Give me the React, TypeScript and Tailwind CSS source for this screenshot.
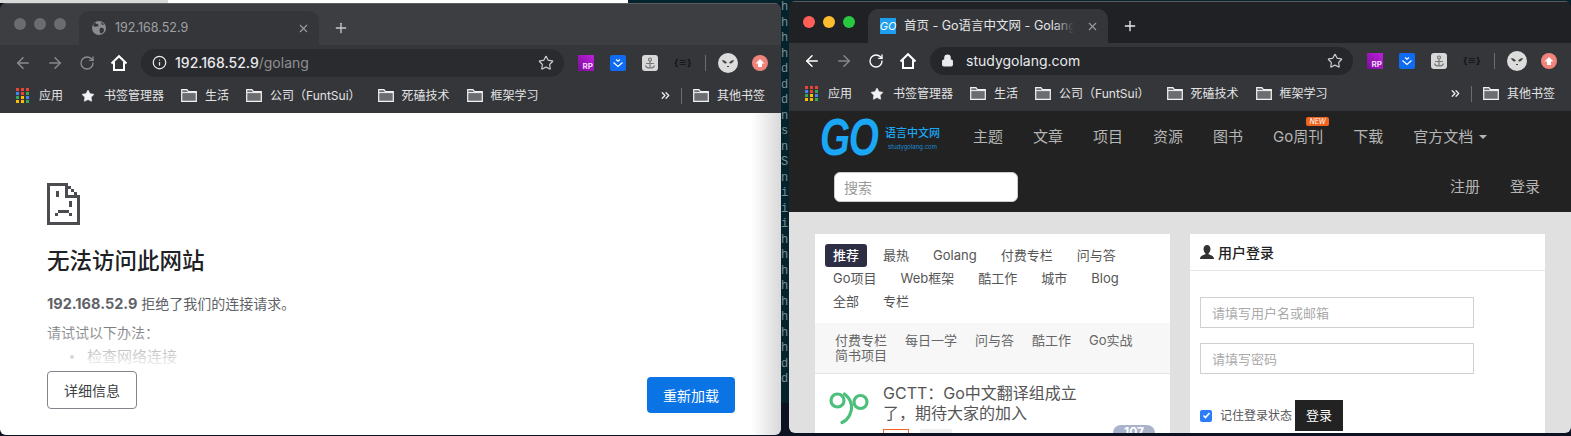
import type { ReactNode } from "react";
import { ArrowLeft, ArrowRight, ChevronsRight, Info, Lock, Plus, RotateCw, Star, X } from "lucide-react";

const bookmarks = ["生活", "公司（FuntSui）", "死磕技术", "框架学习"];
const termLetters = ["h", "h", "h", "h", "d", "d", "d", "n", "s", "n", "S", "n", "i", "i", "i", "h", "h", "h", "h", "h", "h", "h", "h", "d", "d"];
const topTabs = [
  ["推荐", "最热", "Golang", "付费专栏", "问与答"],
  ["Go项目", "Web框架", "酷工作", "城市", "Blog"],
  ["全部", "专栏"],
];
const subTabs = ["付费专栏", "每日一学", "问与答", "酷工作", "Go实战", "简书项目"];
const navItems = ["主题", "文章", "项目", "资源", "图书"];

function FolderIcon() {
  return (
    <svg width="16" height="13" viewBox="0 0 16 13" className="shrink-0">
      <path d="M0.7 0.7h5.2l1.6 2h7.8v9.6H0.7z" fill="#6b6d70" stroke="#f1f3f4" strokeWidth="1.2" />
      <path d="M0.7 3.6h14.6" stroke="#f1f3f4" strokeWidth="1" />
    </svg>
  );
}

function AppsIcon() {
  const colors = ["#ea4335", "#ea4335", "#ea4335", "#4285f4", "#ea4335", "#34a853", "#34a853", "#fbbc05", "#4285f4", "#fbbc05", "#fbbc05", "#34a853"];
  return (
    <div className="grid w-[13px] shrink-0 grid-cols-3 gap-x-[2px] gap-y-[1px]">
      {colors.map((c, i) => (
        <span key={i} className="h-[3px] w-[3px]" style={{ background: c }} />
      ))}
    </div>
  );
}

function HomeIcon() {
  return (
    <svg width="18" height="18" viewBox="0 0 18 18" fill="none" stroke="#fff" strokeWidth="2">
      <path d="M1.5 9.5 9 2.2l7.5 7.3M4 8v8h10V8" />
    </svg>
  );
}

function GlobeIcon() {
  return (
    <svg width="16" height="16" viewBox="0 0 16 16" className="shrink-0">
      <circle cx="8" cy="8" r="7" fill="#8a8c8f" />
      <path d="M4 2.5c1 2 3 1 3.5 2.5S5 7 3.5 6.5 1.5 5 4 2.5zM9 8c2-.5 4 0 4 2s-2 3.5-3 3.5S8 10 9 8zM10 2c1 1 2 1 3 2.5L11 5z" fill="#35363a" />
    </svg>
  );
}

function GoFavicon() {
  return (
    <span className="flex h-4 w-4 shrink-0 items-center justify-center bg-[#1e9fee] text-[11px] italic leading-none text-white">
      GO
    </span>
  );
}

function Extensions() {
  return (
    <div className="ml-[14px] flex items-center">
      <span className="flex h-4 w-4 items-end justify-end bg-gradient-to-tr from-[#7a0f96] to-[#c01fe0] pr-[1px] text-[8px] font-bold leading-[10px] text-[#f4d4ff]">RP</span>
      <span className="ml-4 flex h-4 w-4 items-center justify-center rounded-[2px] bg-[#0f6cf2]">
        <svg width="12" height="10" viewBox="0 0 12 10" fill="none" stroke="#fff" strokeWidth="1.2">
          <path d="M4 1.5 6 3.2l2-1.7M1.5 4.5 6 8.500l4.500-4" />
        </svg>
      </span>
      <span className="ml-4 flex h-4 w-4 items-center justify-center rounded-[3px] bg-[#d8d8d8]">
        <svg width="12" height="12" viewBox="0 0 12 12" fill="none" stroke="#777" strokeWidth="1.2">
          <circle cx="6" cy="2.500" r="1.500" />
          <path d="M6 4v7M2 6.500h8M1.500 8.500c.5 2 2 2.500 4.500 2.500s4-.5 4.500-2.500" />
        </svg>
      </span>
      <span className="ml-4 w-4 text-center text-[9px] font-bold leading-4 text-[#111]">{"{≡}"}</span>
      <span className="ml-[15px] h-[16px] w-px bg-[#6a6c6f]" />
      <span className="ml-[12px] flex h-5 w-5 items-center justify-center rounded-full bg-[#dcdcdc]">
        <svg width="14" height="10" viewBox="0 0 14 10" fill="#444">
          <path d="M1 2c2 0 4 1 5 3-2 1-4 0-5-3zM13 2c-2 0-4 1-5 3 2 1 4 0 5-3zM6 8h2v1H6z" />
        </svg>
      </span>
      <span className="ml-[14px] flex h-4 w-4 items-center justify-center rounded-full bg-[#f0847c]">
        <svg width="10" height="10" viewBox="0 0 10 10" fill="#fff">
          <path d="M5 1 9.500 5.500H7V9H3V5.500H.5z" />
        </svg>
      </span>
    </div>
  );
}

function BrowserChrome({ active, title, favicon, address }: { active: boolean; title: string; favicon: ReactNode; address: ReactNode }) {
  return (
    <div className="shrink-0">
      <div className={`flex h-[42px] items-end pl-[14px] shadow-[inset_0_1px_0_#5a5c5f] ${active ? "bg-[#202124]" : "bg-[#3c3e41]"}`}>
        <div className="mb-[15px] flex gap-2">
          <span className={`h-3 w-3 rounded-full ${active ? "bg-[#ff5f57]" : "bg-[#6a6c6f]"}`} />
          <span className={`h-3 w-3 rounded-full ${active ? "bg-[#febc2e]" : "bg-[#6a6c6f]"}`} />
          <span className={`h-3 w-3 rounded-full ${active ? "bg-[#28c840]" : "bg-[#6a6c6f]"}`} />
        </div>
        <div className="ml-[13px] flex h-[34px] w-[240px] items-center rounded-t-[10px] bg-[#35363a] pl-[12px] pr-[9px]">
          {favicon}
          <span className={`relative ml-[8px] w-[170px] overflow-hidden whitespace-nowrap text-[12.5px] ${active ? "text-[#e4e5e6]" : "text-[#9fa1a4]"}`}>
            {title}
            <span className="absolute inset-y-0 right-0 w-5 bg-gradient-to-r from-transparent to-[#35363a]" />
          </span>
          <X size={13} strokeWidth={2} className="ml-auto text-[#9a9c9f]" />
        </div>
        <Plus size={16} strokeWidth={2} className={`mb-[9px] ml-[14px] ${active ? "text-[#e8eaed]" : "text-[#c8c9cb]"}`} />
      </div>
      <div className="flex h-[35px] items-center bg-[#35363a] pl-[14px]">
        <ArrowLeft size={18} strokeWidth={2} className={active ? "text-white" : "text-[#8a8c8f]"} />
        <ArrowRight size={18} strokeWidth={2} className="ml-[14px] text-[#85878a]" />
        <RotateCw size={16} strokeWidth={2} className={`ml-[15px] ${active ? "text-white" : "text-[#8a8c8f]"}`} />
        <span className="ml-[15px]">
          <HomeIcon />
        </span>
        <div className={`ml-[13px] flex h-[28px] w-[423px] items-center rounded-full pl-[11px] pr-[10px] ${active ? "bg-[#26272a]" : "bg-[#2a2b2e]"}`}>
          {address}
          <Star size={16} strokeWidth={1.8} className="ml-auto text-[#c8cacc]" />
        </div>
        <Extensions />
      </div>
      <div className="flex h-[33px] items-center bg-[#35363a] pb-[2px] pl-4 pr-4 text-[12px] text-[#e3e4e5]">
        <AppsIcon />
        <span className="ml-[10px]">应用</span>
        <Star size={14} fill="#f1f3f4" strokeWidth={1} className="ml-[18px] text-[#f1f3f4]" />
        <span className="ml-[9px]">书签管理器</span>
        {bookmarks.map((b) => (
          <div key={b} className="ml-[17px] flex items-center gap-2">
            <FolderIcon />
            <span className="whitespace-nowrap">{b}</span>
          </div>
        ))}
        <ChevronsRight size={13} strokeWidth={2.5} className="ml-auto text-[#e8eaed]" />
        <span className="ml-[9px] h-[16px] w-px bg-[#6a6c6f]" />
        <div className="ml-[11px] flex items-center gap-2">
          <FolderIcon />
          <span>其他书签</span>
        </div>
      </div>
    </div>
  );
}

function SadPage() {
  return (
    <svg width="33" height="42" viewBox="0 0 33 42" fill="#4a4c4f">
      <path d="M0 0h21v3h3v3h3v3h3v3h3v30H0zM3 3v36h27V15H18V3zm18 3v6h6V9h-3V6z" fillRule="evenodd" />
      <path d="M9 8h3v6H9zM22 18h3v6h-3zM11 27h11v3H11zM8 30h3v3H8zM22 30h3v3h-3z" />
    </svg>
  );
}

function ErrorPage() {
  return (
    <div className="relative flex-1 overflow-hidden bg-white">
      <div className="pl-[47px] pt-[70px]">
        <SadPage />
        <h1 className="mt-[21px] text-[22.5px] font-medium leading-[30px] text-[#202124]">无法访问此网站</h1>
        <p className="mt-[18px] text-[14px] leading-[20px] text-[#5f6368]">
          <b className="text-[14.5px] font-bold">192.168.52.9</b> 拒绝了我们的连接请求。
        </p>
        <p className="mt-[9px] text-[14px] leading-[20px] text-[#5f6368]">请试试以下办法：</p>
        <div className="ml-[23px] mt-[4px] flex items-center text-[15px] leading-[20px] text-[#5f6368]">
          <span className="h-1 w-1 rounded-full bg-[#5f6368]" />
          <span className="ml-[13px]">检查网络连接</span>
        </div>
      </div>
      <div className="absolute inset-x-0 top-[205px] h-[53px] bg-gradient-to-b from-white/0 to-white" />
      <button className="absolute left-[47px] top-[258px] h-[38px] w-[90px] rounded-[4px] border border-[#80868b] bg-white text-[14px] text-[#3c4043]">详细信息</button>
      <button className="absolute left-[647px] top-[264px] h-[36px] w-[88px] rounded-[4px] bg-[#0b74e5] text-[14px] text-white">重新加载</button>
      <div className="absolute inset-y-0 right-0 w-[30px] bg-gradient-to-r from-transparent to-[#00000026]" />
    </div>
  );
}

function GoLogo() {
  return (
    <div className="flex w-[153px] shrink-0 items-center">
      <span className="block w-[64px] origin-left scale-x-[0.76] font-[family-name:'Liberation_Sans',sans-serif] text-[51px] font-bold italic leading-none tracking-[-2px] text-[#1aa7f5]">GO</span>
      <div className="ml-[1px] mt-[2px] text-center">
        <div className="whitespace-nowrap text-[11px] font-medium leading-[14px] text-[#1aa7f5]">语言中文网</div>
        <div className="mt-[3px] text-[6px] leading-[8px] text-[#1a8fd5]">studygolang.com</div>
      </div>
    </div>
  );
}

function GreenGo() {
  return (
    <svg width="40" height="36" viewBox="0 0 40 36" fill="none" stroke="#4cc07a" strokeWidth="3.2" strokeLinecap="round" className="mt-[8px] shrink-0">
      <circle cx="8.5" cy="9.5" r="6.5" />
      <circle cx="31.5" cy="11" r="6.5" />
      <path d="M15.500 3c4 3 6 6 7 11 .7 6-2 14-9.500 17.500" />
    </svg>
  );
}

function SiteHeader() {
  return (
    <div className="h-[101px] shrink-0 bg-[#222]">
      <div className="flex h-[52px] items-center pl-[31px] text-[15px] text-[#b5b5b5]">
        <GoLogo />
        {navItems.map((n) => (
          <span key={n} className="mr-[30px] whitespace-nowrap">{n}</span>
        ))}
        <span className="relative mr-[30px] whitespace-nowrap">
          Go周刊
          <span className="absolute -top-[9px] left-[33px] flex h-[9px] w-[23px] items-center justify-center rounded-[2px] bg-[#f0641e] text-[7px] italic leading-none text-white">NEW</span>
        </span>
        <span className="mr-[30px]">下载</span>
        <span className="flex items-center whitespace-nowrap">
          官方文档
          <span className="ml-[6px] border-x-[4px] border-t-[4px] border-x-transparent border-t-[#b5b5b5]" />
        </span>
      </div>
      <div className="flex items-center pl-[45px] pr-[31px] pt-[9px] text-[15px] text-[#b5b5b5]">
        <div className="flex h-[30px] w-[184px] items-center rounded-[6px] border border-[#ccc] bg-white pl-[9px] text-[14px] text-[#999]">搜索</div>
        <span className="ml-auto">注册</span>
        <span className="ml-[30px]">登录</span>
      </div>
    </div>
  );
}

function FeedCard() {
  return (
    <div className="h-[240px] w-[355px] shrink-0 bg-white">
      <div className="px-[10px] py-[10px] text-[13px] leading-[23px] text-[#555]">
        {topTabs.map((row, i) => (
          <div key={i} className="flex gap-x-2">
            {row.map((t) => (
              <span key={t} className={`whitespace-nowrap rounded-[3px] px-2 ${t === "推荐" ? "bg-[#2d2d44] font-medium text-white" : ""}`}>{t}</span>
            ))}
          </div>
        ))}
      </div>
      <div className="flex h-[51px] flex-wrap content-center gap-x-[18px] border-b border-[#e5e5e5] bg-[#f7f7f7] px-[20px] text-[13px] leading-[15px] text-[#666]">
        {subTabs.map((t) => (
          <span key={t} className="whitespace-nowrap">{t}</span>
        ))}
      </div>
      <div className="flex items-start pl-[14px] pt-[9px]">
        <GreenGo />
        <div className="ml-[14px]">
          <div className="w-[200px] text-[16px] leading-[20px] text-[#555]">GCTT：Go中文翻译组成立了，期待大家的加入</div>
          <div className="mt-[2px] flex items-start">
            <span className="mt-[4px] h-4 w-[26px] border border-[#f0641e]" />
            <span className="ml-[11px] mt-[4px] h-4 w-[32px] rounded-[2px] bg-[#eee]" />
            <span className="ml-[161px] flex h-4 w-[42px] items-start justify-center rounded-full bg-[#a9b4cc] text-[12px] font-bold leading-[14px] text-white">107</span>
          </div>
        </div>
      </div>
    </div>
  );
}

function LoginCard() {
  return (
    <div className="h-[240px] w-[355px] shrink-0 bg-white">
      <div className="flex h-[37px] items-center gap-[4px] border-b border-[#e8e8e8] pl-[10px] text-[14px] font-medium text-[#222]">
        <svg width="14" height="14" viewBox="0 0 14 14" fill="#333">
          <path d="M7 0c2.200 0 3.500 1.700 3.500 4S9 8 8.500 8.500v.8c2 .7 5.500 1.500 5.500 4.700H0c0-3.200 3.500-4 5.500-4.700v-.8C5 8 3.500 6.300 3.500 4S4.800 0 7 0z" />
        </svg>
        用户登录
      </div>
      <div className="px-[10px] pt-[26px]">
        <input placeholder="请填写用户名或邮箱" className="block h-[31px] w-[274px] border-[1.5px] border-[#d0d0d0] bg-white pl-[11px] text-[13px] placeholder:text-[#aaa]" />
        <input placeholder="请填写密码" className="mt-[15px] block h-[31px] w-[274px] border-[1.5px] border-[#d0d0d0] bg-white pl-[11px] text-[13px] placeholder:text-[#aaa]" />
        <div className="mt-[26px] flex items-center text-[12px] text-[#555]">
          <span className="flex h-3 w-3 items-center justify-center rounded-[2px] bg-[#2b7cf6]">
            <svg width="9" height="9" viewBox="0 0 9 9" fill="none" stroke="#fff" strokeWidth="1.6">
              <path d="M1.500 4.500 3.500 6.500 7.500 2" />
            </svg>
          </span>
          <span className="ml-2 whitespace-nowrap">记住登录状态</span>
          <span className="ml-[3px] flex h-[31px] w-[48px] items-center justify-center bg-[#222] text-[13px] text-white">登录</span>
        </div>
      </div>
    </div>
  );
}

export default function App() {
  return (
    <div className="relative h-[436px] w-[1571px] overflow-hidden bg-[#0c1222] font-[family-name:Inter,'Noto_Sans_CJK_SC',sans-serif]">
      <div className="flex h-[3px]">
        <div className="w-[168px] bg-[#d9d9d9]" />
        <div className="w-[460px] bg-white" />
        <div className="flex-1 bg-[#04232c]" />
      </div>
      <div className="absolute left-[781px] top-0 h-[403px] w-[8px] overflow-hidden bg-[#04232c] font-[family-name:'Liberation_Mono',monospace] text-[12px] leading-[15.5px] text-[#7b8f95]">
        {termLetters.map((l, i) => (
          <div key={i}>{l}</div>
        ))}
      </div>

      <div className="absolute left-0 top-[3px] flex h-[432px] w-[781px] flex-col overflow-hidden rounded-[6px]">
        <BrowserChrome
          active={false}
          title="192.168.52.9"
          favicon={<GlobeIcon />}
          address={
            <>
              <Info size={15} strokeWidth={2} className="text-[#e8eaed]" />
              <span className="ml-[8px] text-[14px] font-medium text-[#e8eaed]">
                192.168.52.9<span className="font-normal text-[#8e9093]">/golang</span>
              </span>
            </>
          }
        />
        <ErrorPage />
      </div>

      <div className="absolute left-[789px] top-[1px] flex h-[432px] w-[782px] flex-col overflow-hidden rounded-[6px]">
        <BrowserChrome
          active
          title="首页 - Go语言中文网 - Golang中文社区"
          favicon={<GoFavicon />}
          address={
            <>
              <Lock size={13} fill="#e8eaed" strokeWidth={2} className="text-[#e8eaed]" />
              <span className="ml-[12px] text-[14px] text-[#e8eaed]">studygolang.com</span>
            </>
          }
        />
        <SiteHeader />
        <div className="flex flex-1 gap-[20px] overflow-hidden bg-[#e0e0e0] pl-[26px] pt-[22px]">
          <FeedCard />
          <LoginCard />
        </div>
      </div>
    </div>
  );
}
